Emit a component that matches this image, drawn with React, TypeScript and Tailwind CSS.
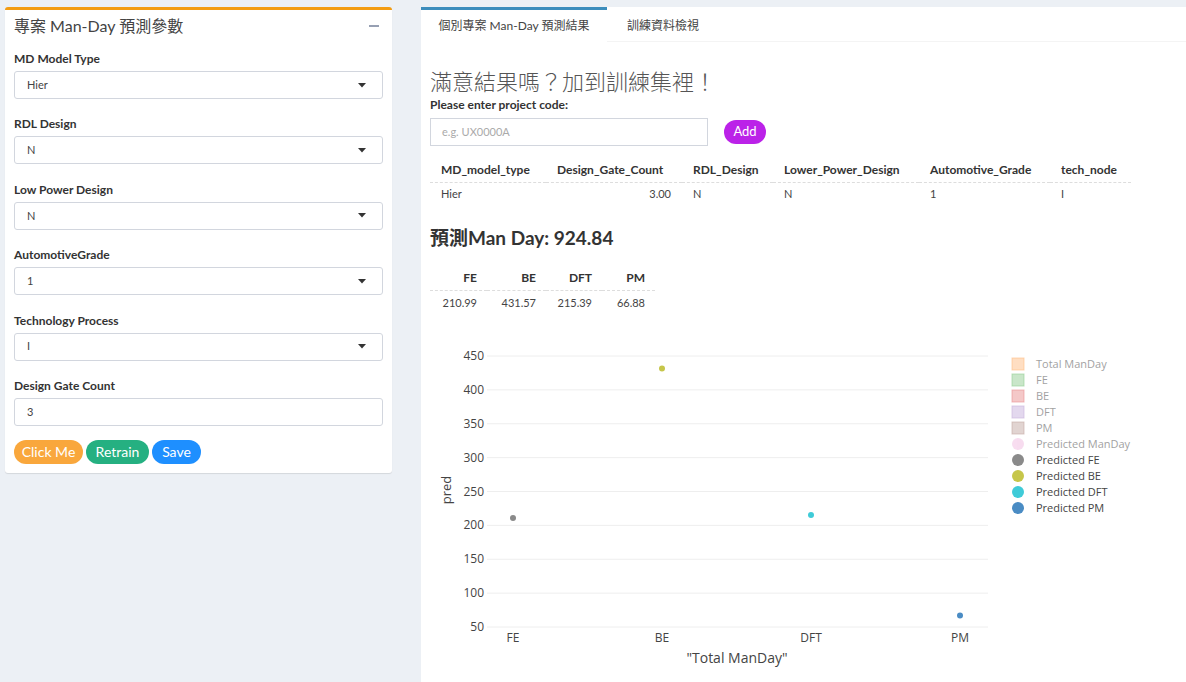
import React from "react";

const FONT = { fontFamily: '"Lato", "Noto Sans CJK TC", sans-serif' };

function Caret() {
  return (
    <svg width="8" height="5" viewBox="0 0 8 5" className="shrink-0">
      <path d="M0 0 L8 0 L4 4.5 Z" fill="#333" />
    </svg>
  );
}

function Field({ label, value, select = true }: { label: string; value: string; select?: boolean }) {
  return (
    <div className="flex flex-col">
      <div className="h-[17px] text-[12px] font-bold leading-[17px] text-[#333]">{label}</div>
      <div className="mt-[4px] flex h-[28px] items-center justify-between rounded-[3px] border border-[#d2d6de] pl-[12px] pr-[16px] text-[11px] text-[#444]">
        <span>{value}</span>
        {select && <Caret />}
      </div>
    </div>
  );
}

const cols = [
  { h: "MD_model_type", v: "Hier", w: "w-[116px]", right: false },
  { h: "Design_Gate_Count", v: "3.00", w: "w-[136px]", right: true },
  { h: "RDL_Design", v: "N", w: "w-[91px]", right: false },
  { h: "Lower_Power_Design", v: "N", w: "w-[146px]", right: false },
  { h: "Automotive_Grade", v: "1", w: "w-[131px]", right: false },
  { h: "tech_node", v: "I", w: "w-[81px]", right: false },
];

const md = [
  { h: "FE", v: "210.99", w: "w-[57px]" },
  { h: "BE", v: "431.57", w: "w-[59px]" },
  { h: "DFT", v: "215.39", w: "w-[56px]" },
  { h: "PM", v: "66.88", w: "w-[53px]" },
];

function Chart() {
  const yTicks = [450, 400, 350, 300, 250, 200, 150, 100, 50];
  const yOf = (v: number) => 297 - (v - 50) * (271 / 400);
  const cats = [
    { c: "FE", x: 92, v: 210.99, col: "#8a8a8a" },
    { c: "BE", x: 241, v: 431.57, col: "#c6c64a" },
    { c: "DFT", x: 390, v: 215.39, col: "#3fcbd8" },
    { c: "PM", x: 539, v: 66.88, col: "#4a8cc4" },
  ];
  const legend = [
    { t: "Total ManDay", col: "#ff7f0e", sq: true, off: true },
    { t: "FE", col: "#2ca02c", sq: true, off: true },
    { t: "BE", col: "#d62728", sq: true, off: true },
    { t: "DFT", col: "#9467bd", sq: true, off: true },
    { t: "PM", col: "#8c564b", sq: true, off: true },
    { t: "Predicted ManDay", col: "#e377c2", sq: false, off: true },
    { t: "Predicted FE", col: "#8a8a8a", sq: false, off: false },
    { t: "Predicted BE", col: "#c6c64a", sq: false, off: false },
    { t: "Predicted DFT", col: "#3fcbd8", sq: false, off: false },
    { t: "Predicted PM", col: "#4a8cc4", sq: false, off: false },
  ];
  return (
    <svg width="765" height="352" viewBox="0 0 765 352" style={{ fontFamily: '"Open Sans", sans-serif' }}>
      {yTicks.map((t) => (
        <g key={t}>
          <line x1="66" x2="567" y1={yOf(t)} y2={yOf(t)} stroke="#eeeeee" strokeWidth="1" />
          <text x="63" y={yOf(t) + 4} textAnchor="end" fontSize="12" fill="#444">
            {t}
          </text>
        </g>
      ))}
      {cats.map((c) => (
        <g key={c.c}>
          <text x={c.x} y={312} textAnchor="middle" fontSize="12" fill="#444">
            {c.c}
          </text>
          <circle cx={c.x} cy={yOf(c.v)} r="3" fill={c.col} />
        </g>
      ))}
      <text x="316" y="333" textAnchor="middle" fontSize="14" fill="#444">
        "Total ManDay"
      </text>
      <text x="0" y="0" transform="translate(30 160) rotate(-90)" textAnchor="middle" fontSize="13" fill="#444">
        pred
      </text>
      {legend.map((l, i) => {
        const y = 34 + i * 16;
        return (
          <g key={l.t} opacity={l.off ? 0.5 : 1}>
            {l.sq ? (
              <rect x={591} y={y - 6} width="12" height="12" fill={l.col} fillOpacity="0.5" stroke={l.col} strokeOpacity="0.6" strokeWidth="1" />
            ) : (
              <circle cx={597} cy={y} r="6" fill={l.col} fillOpacity={l.off ? 0.5 : 1} />
            )}
            <text x={615} y={y + 4} fontSize="11" fill="#444">
              {l.t}
            </text>
          </g>
        );
      })}
    </svg>
  );
}

export default function App() {
  return (
    <div className="flex h-[682px] w-[1186px] overflow-hidden bg-[#ecf0f5]" style={FONT}>
      {/* left parameters box */}
      <div className="ml-[5px] mt-[7px] flex h-[466px] w-[387px] flex-col rounded-[3px] border-t-[3px] border-[#f39c12] bg-white shadow-[0_1px_1px_rgba(0,0,0,0.1)]">
        <div className="flex h-[32px] items-center justify-between pl-[9px] pr-[13px]">
          <span className="text-[16px] text-[#444]">專案 Man-Day 預測參數</span>
          <span className="h-[2px] w-[10px] bg-[#97a0b3]" />
        </div>
        <div className="flex flex-col gap-[16.4px] px-[9px] pt-[8px]">
          <Field label="MD Model Type" value="Hier" />
          <Field label="RDL Design" value="N" />
          <Field label="Low Power Design" value="N" />
          <Field label="AutomotiveGrade" value="1" />
          <Field label="Technology Process" value="I" />
          <Field label="Design Gate Count" value="3" select={false} />
        </div>
        <div className="mt-[14px] flex gap-[3px] px-[9px] text-[14px] text-white">
          <button className="h-[24px] w-[69px] rounded-full bg-[#f9a73c]">Click Me</button>
          <button className="h-[24px] w-[63px] rounded-full bg-[#25b081]">Retrain</button>
          <button className="h-[24px] w-[49px] rounded-full bg-[#1e8fff]">Save</button>
        </div>
      </div>

      {/* right tab panel */}
      <div className="ml-[29px] mt-[7px] flex flex-1 flex-col bg-white">
        <div className="flex h-[35px] border-b border-[#f4f4f4]">
          <div className="-mb-px flex w-[186px] items-center justify-center border-t-[3px] border-[#3c8dbc] bg-white text-[12px] text-[#444]">
            個別專案 Man-Day 預測結果
          </div>
          <div className="flex items-center pl-[20px] pt-[3px] text-[12px] text-[#444]">訓練資料檢視</div>
        </div>
        <div className="flex flex-col pl-[9px]">
          <div className="mt-[27px] h-[26px] text-[22px] font-light leading-[26px] text-[#555]">滿意結果嗎？加到訓練集裡！</div>
          <div className="mt-[1px] h-[17px] text-[12px] font-bold leading-[17px] text-[#333]">Please enter project code:</div>
          <div className="mt-[5px] flex items-center">
            <div className="flex h-[28px] w-[278px] items-center border border-[#d2d6de] pl-[11px] text-[11px] text-[#aaa]">
              e.g. UX0000A
            </div>
            <button className="ml-[16px] h-[24px] w-[42px] rounded-full bg-[#bb22e8] text-[13px] text-white">Add</button>
          </div>
          <table className="mt-[12px] border-collapse text-[12px] text-[#333]">
            <thead>
              <tr>
                {cols.map((c) => (
                  <th
                    key={c.h}
                    className={`${c.w} h-[24px] border-b border-dashed border-[#ddd] px-[11px] text-left font-bold`}
                  >
                    {c.h}
                  </th>
                ))}
                <th />
              </tr>
            </thead>
            <tbody>
              <tr>
                {cols.map((c) => (
                  <td key={c.h} className={`h-[24px] px-[11px] text-[11px] text-[#444] ${c.right ? "text-right" : "text-left"}`}>
                    {c.v}
                  </td>
                ))}
                <td />
              </tr>
            </tbody>
          </table>
          <div className="mt-[19px] h-[26px] text-[19px] font-bold leading-[26px] text-[#333]">預測Man Day: 924.84</div>
          <table className="mt-[15px] w-[225px] border-collapse text-[12px] text-[#333]">
            <thead>
              <tr>
                {md.map((c) => (
                  <th key={c.h} className={`${c.w} h-[24px] border-b border-dashed border-[#ddd] pr-[10px] text-right font-bold`}>
                    {c.h}
                  </th>
                ))}
              </tr>
            </thead>
            <tbody>
              <tr>
                {md.map((c) => (
                  <td key={c.h} className="h-[25px] pr-[10px] text-right text-[11px] text-[#444]">
                    {c.v}
                  </td>
                ))}
              </tr>
            </tbody>
          </table>
        </div>
        <div className="mt-[15px]">
          <Chart />
        </div>
      </div>
    </div>
  );
}
